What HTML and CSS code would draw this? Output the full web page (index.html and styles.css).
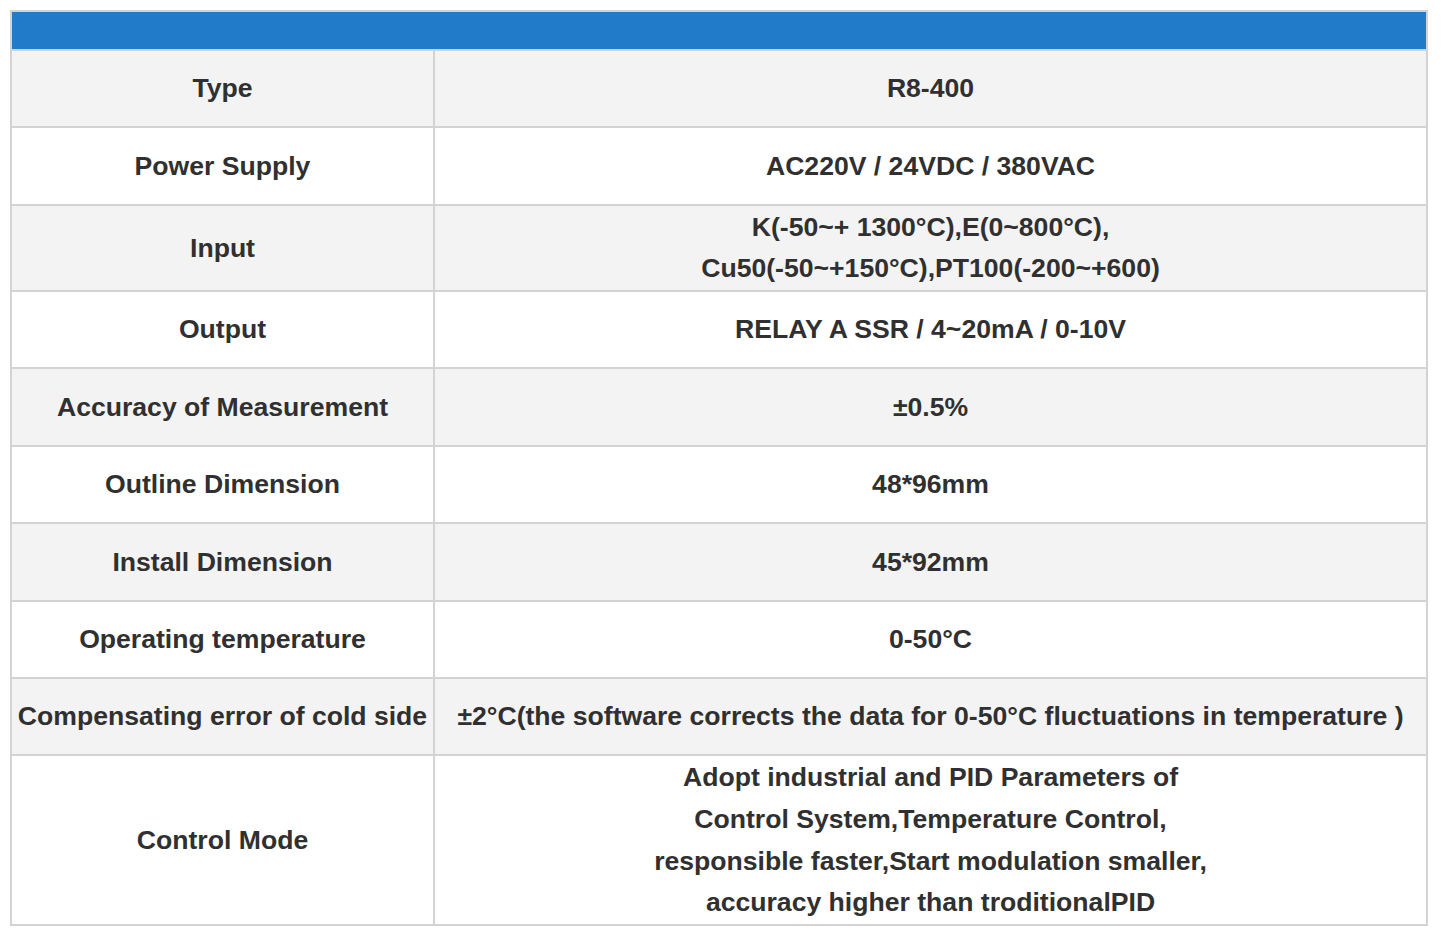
FILE: index.html
```html
<!DOCTYPE html>
<html>
<head>
<meta charset="utf-8">
<link rel="stylesheet" href="styles.css">
</head>
<body>
<table class="spec">
  <colgroup><col class="c-key"><col class="c-val"></colgroup>
  <tr class="head"><td colspan="2"></td></tr>
  <tr class="alt"><td class="k">Type</td><td class="v">R8-400</td></tr>
  <tr><td class="k">Power Supply</td><td class="v">AC220V / 24VDC / 380VAC</td></tr>
  <tr class="alt"><td class="k">Input</td><td class="v">K(-50~+ 1300°C),E(0~800°C),<br>Cu50(-50~+150°C),PT100(-200~+600)</td></tr>
  <tr><td class="k">Output</td><td class="v">RELAY A SSR / 4~20mA / 0-10V</td></tr>
  <tr class="alt"><td class="k">Accuracy of Measurement</td><td class="v">±0.5%</td></tr>
  <tr><td class="k">Outline Dimension</td><td class="v">48*96mm</td></tr>
  <tr class="alt"><td class="k">Install Dimension</td><td class="v">45*92mm</td></tr>
  <tr><td class="k">Operating temperature</td><td class="v">0-50°C</td></tr>
  <tr class="alt"><td class="k">Compensating error of cold side</td><td class="v">±2°C(the software corrects the data for 0-50°C fluctuations in temperature )</td></tr>
  <tr><td class="k">Control Mode</td><td class="v">Adopt industrial and PID Parameters of<br>Control System,Temperature Control,<br>responsible faster,Start modulation smaller,<br>accuracy higher than troditionalPID</td></tr>
</table>
</body>
</html>
```
FILE: styles.css
```css
html, body {
  margin: 0;
  padding: 0;
  background: #ffffff;
}
body {
  padding: 10px 0 0 10px;
  font-family: "Liberation Sans", Arial, Helvetica, sans-serif;
}
.spec {
  border-collapse: collapse;
  width: 1418px;
  table-layout: fixed;
  color: #303030;
  font-size: 26.6px;
  font-weight: bold;
  line-height: 41.6px;
}
.c-key {
  width: 423px;
}
.spec td {
  border: 2px solid #d3d3d3;
  text-align: center;
  vertical-align: middle;
  height: 74.4px;
  padding: 1px 2px 0;
  white-space: nowrap;
}
.spec .head td {
  background: #227bc9;
  height: 37px;
  padding: 0;
  border-bottom-color: #c8d6e4;
}
.spec .alt td {
  background: #f3f3f3;
}
```
